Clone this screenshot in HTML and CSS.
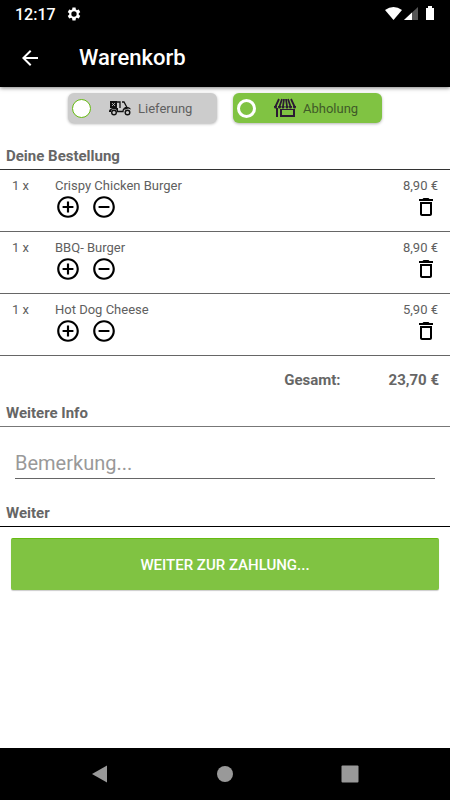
FILE: index.html
```html
<!DOCTYPE html>
<html lang="de">

<head>
  <meta charset="UTF-8">
  <meta name="viewport" content="width=device-width, initial-scale=1.0">
  <title>Warenkorb</title>
  <link rel="stylesheet" href="styles.css">
</head>

<body>

  <!-- Icons -->
  <svg class="sprite" aria-hidden="true">
    <symbol id="plus" viewBox="0 0 24 24">
      <path d="M13 7h-2v4H7v2h4v4h2v-4h4v-2h-4V7zm-1-5C6.480 2 2 6.480 2 12s4.480 10 10 10 10-4.480 10-10S17.520 2 12 2zm0 18c-4.410 0-8-3.590-8-8s3.590-8 8-8 8 3.590 8 8-3.590 8-8 8z"/>
    </symbol>
    <symbol id="minus" viewBox="0 0 24 24">
      <path d="M7 11v2h10v-2H7zm5-9C6.480 2 2 6.480 2 12s4.480 10 10 10 10-4.480 10-10S17.520 2 12 2zm0 18c-4.410 0-8-3.590-8-8s3.590-8 8-8 8 3.590 8 8-3.590 8-8 8z"/>
    </symbol>
    <symbol id="trash" viewBox="0 0 24 24">
      <path d="M6 19c0 1.100.9 2 2 2h8c1.100 0 2-.9 2-2V7H6v12zM8 9h8v10H8V9zm7.500-5l-1-1h-5l-1 1H5v2h14V4z"/>
    </symbol>
  </svg>

  <div class="status-bar">
    <span>12:17</span>
    <svg class="gear" viewBox="0 0 24 24">
      <path fill-rule="evenodd" d="M19.140 12.940c.04-.3.06-.61.06-.94 0-.32-.02-.64-.07-.94l2.030-1.580c.18-.14.23-.41.12-.61l-1.920-3.320c-.12-.22-.37-.29-.59-.22l-2.390.96c-.5-.38-1.030-.7-1.620-.94l-.36-2.540c-.04-.24-.24-.41-.48-.41h-3.840c-.24 0-.43.17-.47.41l-.36 2.540c-.59.24-1.130.57-1.620.94l-2.390-.96c-.22-.08-.47 0-.59.22L2.740 8.870c-.12.21-.08.47.12.61l2.030 1.580c-.05.3-.09.63-.09.94s.02.64.07.94l-2.030 1.580c-.18.14-.23.41-.12.61l1.920 3.320c.12.22.37.29.59.22l2.390-.96c.5.38 1.030.7 1.620.94l.36 2.540c.05.24.24.41.48.41h3.840c.24 0 .44-.17.47-.41l.36-2.540c.59-.24 1.130-.56 1.620-.94l2.390.96c.22.08.47 0 .59-.22l1.920-3.320c.12-.22.07-.47-.12-.61l-2.010-1.580zM12 16a4 4 0 1 1 0-8 4 4 0 0 1 0 8z"/>
    </svg>
    <svg class="signals" viewBox="0 0 50 16">
      <path d="M0 4Q8.500-2 17 4L8.500 14z"/>
      <path d="M33 1v13H19z" fill="#555"/>
      <path d="M27 6.500V14H19z"/>
      <path d="M41 2h2V0h4v2h2v12h-8z"/>
    </svg>
  </div>

  <header class="app-bar">
    <a href="#" class="back" aria-label="Zurück">
      <svg viewBox="0 0 24 24"><path d="M20 11H7.830l5.590-5.590L12 4l-8 8 8 8 1.410-1.410L7.830 13H20v-2z"/></svg>
    </a>
    <h1>Warenkorb</h1>
  </header>

  <main>
    <div class="options">
      <label class="option">
        <input type="radio" name="versand">
        <svg class="option-icon" viewBox="0 0 22 16">
          <path d="M1 1h7v7H1z"/>
          <path d="M3 3l3 3M6 3L3 6" stroke="#ccc" stroke-width="0.800" fill="none"/>
          <path d="M0 12c0-3 2-4 5-4h4v4H8a3 3 0 0 0-6 0z"/>
          <path d="M8 2h3v6M8 11.500h6c0-3 2-4 4-4L15 2h-2" stroke="#111" stroke-width="1.300" fill="none"/>
          <path d="M15 10c1-4 6-4 7-.5l-3-1z"/>
          <circle cx="5" cy="12.500" r="2.300" fill="#ccc" stroke="#111" stroke-width="1.400"/>
          <circle cx="18.500" cy="12.500" r="2.300" fill="#ccc" stroke="#111" stroke-width="1.400"/>
        </svg>
        <span>Lieferung</span>
      </label>
      <label class="option selected">
        <input type="radio" name="versand" checked>
        <svg class="option-icon shop" viewBox="0 0 22 20">
          <path d="M5 1L1.500 8.500M8 1L5.500 8.500M10 1L9 8.500M12 1l1 7.500M14 1l2.500 7.500M17 1l3.500 7.500" stroke="#2b1a33" stroke-width="1.800" fill="none"/>
          <path d="M0 8h3v1a1.500 1.500 0 0 1-3 0zM4 8h3v1a1.500 1.500 0 0 1-3 0zM7.500 8h3v1a1.500 1.500 0 0 1-3 0zM11.500 8h3v1a1.500 1.500 0 0 1-3 0zM15 8h3v1a1.500 1.500 0 0 1-3 0zM19 8h3v1a1.500 1.500 0 0 1-3 0z"/>
          <path fill-rule="evenodd" d="M2 10h2v9H2zM6 11h15v8H6zM8 12h11v5H8z"/>
        </svg>
        <span>Abholung</span>
      </label>
    </div>

    <h2>Deine Bestellung</h2>
    <ul class="items">
      <li class="item">
        <span class="count">1 x</span>
        <span class="name">Crispy Chicken Burger</span>
        <span class="price">8,90 €</span>
        <div class="amount">
          <button type="button" aria-label="Mehr"><svg><use href="#plus"/></svg></button>
          <button type="button" aria-label="Weniger"><svg><use href="#minus"/></svg></button>
        </div>
        <button type="button" class="delete" aria-label="Löschen"><svg><use href="#trash"/></svg></button>
      </li>
      <li class="item">
        <span class="count">1 x</span>
        <span class="name">BBQ- Burger</span>
        <span class="price">8,90 €</span>
        <div class="amount">
          <button type="button" aria-label="Mehr"><svg><use href="#plus"/></svg></button>
          <button type="button" aria-label="Weniger"><svg><use href="#minus"/></svg></button>
        </div>
        <button type="button" class="delete" aria-label="Löschen"><svg><use href="#trash"/></svg></button>
      </li>
      <li class="item">
        <span class="count">1 x</span>
        <span class="name">Hot Dog Cheese</span>
        <span class="price">5,90 €</span>
        <div class="amount">
          <button type="button" aria-label="Mehr"><svg><use href="#plus"/></svg></button>
          <button type="button" aria-label="Weniger"><svg><use href="#minus"/></svg></button>
        </div>
        <button type="button" class="delete" aria-label="Löschen"><svg><use href="#trash"/></svg></button>
      </li>
    </ul>
    <div class="total">
      <span>Gesamt:</span>
      <span>23,70 €</span>
    </div>

    <h2 class="info-title">Weitere Info</h2>
    <div class="remark">
      <input type="text" placeholder="Bemerkung..." aria-label="Bemerkung">
    </div>

    <h2 class="next-title">Weiter</h2>
    <button type="button" class="pay">WEITER ZUR ZAHLUNG...</button>
  </main>

  <nav class="nav-bar">
    <button type="button" aria-label="Zurück"><svg viewBox="0 0 18 18"><path d="M16 0.500v17L1 9z"/></svg></button>
    <button type="button" aria-label="Start"><svg viewBox="0 0 18 18"><circle cx="9" cy="9" r="8"/></svg></button>
    <button type="button" aria-label="Übersicht"><svg viewBox="0 0 18 18"><rect x="0.500" y="0.500" width="17" height="17" rx="1"/></svg></button>
  </nav>

</body>

</html>
```
FILE: styles.css
```css
* {
  box-sizing: border-box;
}

body {
  margin: 0;
  min-height: 100vh;
  display: flex;
  flex-direction: column;
  font-family: Roboto, sans-serif;
  font-size: 13px;
  color: #606060;
  background: #fff;
}

button {
  padding: 0;
  border: 0;
  background: none;
  font-family: inherit;
}

svg {
  display: block;
}

.sprite {
  position: absolute;
  width: 0;
  height: 0;
}

/* Kopfbereich */
.status-bar {
  display: flex;
  align-items: center;
  height: 28px;
  padding: 0 15px;
  background: #000;
  color: #fff;
  font-size: 16px;
  font-weight: 500;
}

.status-bar svg {
  fill: #fff;
}

.gear {
  width: 16px;
  height: 16px;
  margin-left: 10px;
}

.signals {
  width: 50px;
  height: 16px;
  margin-left: auto;
}

.app-bar {
  display: flex;
  align-items: center;
  height: 59px;
  padding: 0 18px;
  gap: 37px;
  background: #000;
  color: #fff;
  box-shadow: 0 1px 4px rgba(0, 0, 0, 0.5);
}

.back svg {
  width: 24px;
  height: 24px;
  fill: #fff;
}

.app-bar h1 {
  margin: 0;
  font-size: 22px;
  font-weight: 500;
}

main {
  flex: 1;
}

/* Lieferung / Abholung */
.options {
  display: flex;
  justify-content: center;
  gap: 16px;
  padding: 6px 0 19px;
}

.option {
  display: flex;
  align-items: center;
  width: 149px;
  height: 30px;
  padding: 0 4px;
  border-radius: 6px;
  background: #ccc;
  box-shadow: 0 1px 3px rgba(0, 0, 0, 0.3);
}

.option input {
  appearance: none;
  width: 19px;
  height: 19px;
  margin: 0 18px 0 0;
  border: 1px solid #6b1;
  border-radius: 50%;
  background: #fff;
}

.option-icon {
  width: 22px;
  height: 16px;
  margin-right: 7px;
  fill: #111;
}

.option-icon.shop {
  height: 20px;
  fill: #2b1a33;
}

.option.selected {
  background: #80c342;
  color: #3f5a28;
}

.option.selected input {
  border: 3px solid #fff;
  background: #80c342;
}

/* Bestellung */
h2 {
  margin: 0;
  padding: 0 6px;
  height: 28px;
  line-height: 28px;
  font-size: 15px;
  font-weight: 700;
  color: #666;
  border-bottom: 1px solid #333;
}

.items {
  margin: 0;
  padding: 0;
  list-style: none;
}

.item {
  display: grid;
  grid-template-columns: 43px 1fr auto;
  align-content: start;
  height: 62px;
  padding: 8px 12px 0;
  line-height: 16px;
  border-bottom: 1px solid #666;
}

.amount {
  grid-column: 2;
  display: flex;
  gap: 10px;
}

.amount svg {
  width: 26px;
  height: 26px;
}

.delete {
  justify-self: end;
}

.delete svg {
  width: 24px;
  height: 24px;
}

.total {
  display: flex;
  justify-content: flex-end;
  gap: 48px;
  padding: 15px 11px 10px;
  line-height: 18px;
  font-size: 15px;
  font-weight: 700;
  color: #666;
}

.info-title {
  border-bottom: 1px solid #777;
}

/* Bemerkung */
.remark {
  padding: 20px 15px;
}

.remark input {
  display: block;
  width: 100%;
  height: 32px;
  padding: 0;
  border: 0;
  border-bottom: 1px solid #666;
  background: none;
  font-family: inherit;
  font-size: 20px;
  color: #555;
}

.remark input::placeholder {
  color: #999;
}

.next-title {
  border-bottom-color: #000;
}

.pay {
  display: block;
  width: calc(100% - 22px);
  height: 52px;
  margin: 11px;
  border-top: 1px solid #6b1;
  border-radius: 2px;
  background: #80c342;
  color: #fff;
  font-size: 15px;
  font-weight: 500;
  box-shadow: 0 1px 1px rgba(0, 0, 0, 0.2);
}

/* Navigationsleiste */
.nav-bar {
  display: flex;
  justify-content: center;
  gap: 107px;
  padding: 17px 0;
  background: #000;
}

.nav-bar svg {
  width: 18px;
  height: 18px;
  fill: #999;
}
```
